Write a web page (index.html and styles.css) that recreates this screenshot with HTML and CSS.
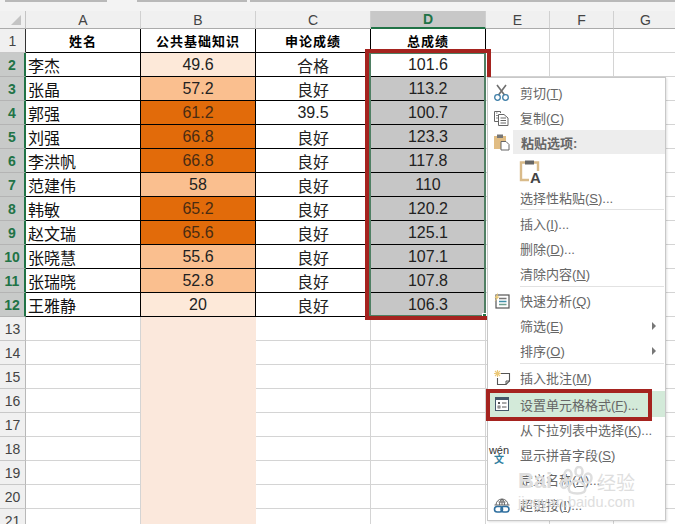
FILE: index.html
```html
<!DOCTYPE html>
<html>
<head>
  <meta charset="utf-8">
  <link rel="stylesheet" href="styles.css">
</head>

<body>
  <div class="sheet">
    <div class="formula-edge">
      <span class="seg seg-a"></span>
      <span class="seg seg-b"></span>
      <span class="seg seg-c"></span>
    </div>

    <div class="grid">
      <div class="corner"><span class="corner-mark"></span></div>
      <div class="ch">A</div><div class="ch">B</div><div class="ch">C</div><div class="ch ch-sel">D</div><div class="ch">E</div><div class="ch">F</div><div class="ch">G</div>

      <div class="rh rh-top">1</div>
      <div class="c bk th">姓名</div><div class="c bk th">公共基础知识</div><div class="c bk th">申论成绩</div><div class="c bk th">总成绩</div><div class="c"></div><div class="c"></div><div class="c"></div>

      <div class="rh sel">2</div>
      <div class="c bk name">李杰</div><div class="c bk lo">49.6</div><div class="c bk">合格</div><div class="c bk">101.6</div><div class="c"></div><div class="c"></div><div class="c"></div>

      <div class="rh sel">3</div>
      <div class="c bk name">张晶</div><div class="c bk mid">57.2</div><div class="c bk">良好</div><div class="c bk gray">113.2</div><div class="c"></div><div class="c"></div><div class="c"></div>

      <div class="rh sel">4</div>
      <div class="c bk name">郭强</div><div class="c bk hi">61.2</div><div class="c bk">39.5</div><div class="c bk gray">100.7</div><div class="c"></div><div class="c"></div><div class="c"></div>

      <div class="rh sel">5</div>
      <div class="c bk name">刘强</div><div class="c bk hi">66.8</div><div class="c bk">良好</div><div class="c bk gray">123.3</div><div class="c"></div><div class="c"></div><div class="c"></div>

      <div class="rh sel">6</div>
      <div class="c bk name">李洪帆</div><div class="c bk hi">66.8</div><div class="c bk">良好</div><div class="c bk gray">117.8</div><div class="c"></div><div class="c"></div><div class="c"></div>

      <div class="rh sel">7</div>
      <div class="c bk name">范建伟</div><div class="c bk mid">58</div><div class="c bk">良好</div><div class="c bk gray">110</div><div class="c"></div><div class="c"></div><div class="c"></div>

      <div class="rh sel">8</div>
      <div class="c bk name">韩敏</div><div class="c bk hi">65.2</div><div class="c bk">良好</div><div class="c bk gray">120.2</div><div class="c"></div><div class="c"></div><div class="c"></div>

      <div class="rh sel">9</div>
      <div class="c bk name">赵文瑞</div><div class="c bk hi">65.6</div><div class="c bk">良好</div><div class="c bk gray">125.1</div><div class="c"></div><div class="c"></div><div class="c"></div>

      <div class="rh sel">10</div>
      <div class="c bk name">张晓慧</div><div class="c bk mid">55.6</div><div class="c bk">良好</div><div class="c bk gray">107.1</div><div class="c"></div><div class="c"></div><div class="c"></div>

      <div class="rh sel">11</div>
      <div class="c bk name">张瑞晓</div><div class="c bk mid">52.8</div><div class="c bk">良好</div><div class="c bk gray">107.8</div><div class="c"></div><div class="c"></div><div class="c"></div>

      <div class="rh sel">12</div>
      <div class="c bk name">王雅静</div><div class="c bk lo">20</div><div class="c bk">良好</div><div class="c bk gray">106.3</div><div class="c"></div><div class="c"></div><div class="c"></div>

      <div class="rh">13</div><div class="c"></div><div class="c tint"></div><div class="c"></div><div class="c"></div><div class="c"></div><div class="c"></div><div class="c"></div>
      <div class="rh">14</div><div class="c"></div><div class="c tint"></div><div class="c"></div><div class="c"></div><div class="c"></div><div class="c"></div><div class="c"></div>
      <div class="rh">15</div><div class="c"></div><div class="c tint"></div><div class="c"></div><div class="c"></div><div class="c"></div><div class="c"></div><div class="c"></div>
      <div class="rh">16</div><div class="c"></div><div class="c tint"></div><div class="c"></div><div class="c"></div><div class="c"></div><div class="c"></div><div class="c"></div>
      <div class="rh">17</div><div class="c"></div><div class="c tint"></div><div class="c"></div><div class="c"></div><div class="c"></div><div class="c"></div><div class="c"></div>
      <div class="rh">18</div><div class="c"></div><div class="c tint"></div><div class="c"></div><div class="c"></div><div class="c"></div><div class="c"></div><div class="c"></div>
      <div class="rh">19</div><div class="c"></div><div class="c tint"></div><div class="c"></div><div class="c"></div><div class="c"></div><div class="c"></div><div class="c"></div>
      <div class="rh">20</div><div class="c"></div><div class="c tint"></div><div class="c"></div><div class="c"></div><div class="c"></div><div class="c"></div><div class="c"></div>
      <div class="rh">21</div><div class="c"></div><div class="c tint"></div><div class="c"></div><div class="c"></div><div class="c"></div><div class="c"></div><div class="c"></div>
    </div>

    <!-- selection and the red marks drawn on top of the screenshot -->
    <div class="selection"><span class="fill-handle"></span></div>
    <div class="mark mark-column"></div>

    <div class="menu">
      <div class="item">
        <span class="ico">
          <svg width="18" height="18" viewBox="0 0 18 18" fill="none">
            <path d="M4 1 L11.5 11 M13 1 L5.5 11" stroke="#6f6f6f" stroke-width="1.6"/>
            <circle cx="4.5" cy="13.5" r="2.8" stroke="#3f7fa8" stroke-width="1.3"/>
            <circle cx="12.5" cy="13.5" r="2.8" stroke="#3f7fa8" stroke-width="1.3"/>
          </svg>
        </span>
        <span>剪切(<u>T</u>)</span>
      </div>
      <div class="item">
        <span class="ico">
          <svg width="18" height="18" viewBox="0 0 18 18" fill="none" stroke="#666" stroke-width="1">
            <path d="M1.5 2.5 H7.5 V4 M1.5 2.5 V12.5 H5"/>
            <path d="M3 4 H4.5 M3 6.5 H5 M3 9 H5" stroke="#888"/>
            <path d="M5.5 5.5 H11 L15 9 V16.5 H5.5 Z" fill="#fff"/>
            <path d="M7.5 9 H13 M7.5 11.5 H13 M7.5 14 H13"/>
          </svg>
        </span>
        <span>复制(<u>C</u>)</span>
      </div>
      <div class="item item-head">
        <span class="ico">
          <svg width="18" height="18" viewBox="0 0 18 18">
            <rect x="1" y="3" width="12" height="13" fill="#e1bd84"/>
            <rect x="4" y="1.5" width="6" height="3.5" fill="#777"/>
            <path d="M8 8.5 H13 L16 11.5 V17 H8 Z" fill="#fff" stroke="#666" stroke-width="1"/>
          </svg>
        </span>
        <span class="head-label">粘贴选项:</span>
      </div>
      <div class="item-paste">
        <svg width="24" height="26" viewBox="0 0 24 26" fill="none">
          <path d="M6 3.5 H2 V21 H10" stroke="#d9bb8a" stroke-width="2.4"/>
          <path d="M15 3.5 H19 V12" stroke="#d9bb8a" stroke-width="2.4"/>
          <rect x="6" y="1.5" width="9" height="4" fill="#666"/>
          <text x="11" y="24" class="paste-a">A</text>
        </svg>
      </div>
      <div class="item item-short"><span class="ico"></span><span>选择性粘贴(<u>S</u>)...</span></div>
      <div class="sep"></div>

      <div class="item"><span class="ico"></span><span>插入(<u>I</u>)...</span></div>
      <div class="item"><span class="ico"></span><span>删除(<u>D</u>)...</span></div>
      <div class="item"><span class="ico"></span><span>清除内容(<u>N</u>)</span></div>
      <div class="sep"></div>

      <div class="item">
        <span class="ico">
          <svg width="18" height="18" viewBox="0 0 18 18" fill="none">
            <rect x="3" y="3" width="13" height="13" fill="#fff" stroke="#555" stroke-width="1.2"/>
            <path d="M6 6.5 H13.5" stroke="#777" stroke-width="1.5"/>
            <path d="M6 9.5 H13.5" stroke="#3f8fa8" stroke-width="1.5"/>
            <path d="M6 12.5 H13.5" stroke="#6f9f8f" stroke-width="1.5"/>
            <path d="M5 0.5 L1.5 6 H3.5 L1.5 10 L6.5 4.5 H4.5 Z" fill="#e9c877"/>
          </svg>
        </span>
        <span>快速分析(<u>Q</u>)</span>
      </div>
      <div class="item"><span class="ico"></span><span>筛选(<u>E</u>)</span><span class="arrow"></span></div>
      <div class="item"><span class="ico"></span><span>排序(<u>O</u>)</span><span class="arrow"></span></div>
      <div class="sep"></div>

      <div class="item">
        <span class="ico">
          <svg width="18" height="18" viewBox="0 0 18 18" fill="none">
            <path d="M8 4.5 H16.5 V12 L13 15.5 H4.5 V9" stroke="#555" stroke-width="1.1"/>
            <path d="M13 15.5 V12 H16.5" stroke="#555" stroke-width="1"/>
            <path d="M4.5 1 V8 M1 4.5 H8 M2 2 L7 7 M7 2 L2 7" stroke="#ecc978" stroke-width="1.1"/>
          </svg>
        </span>
        <span>插入批注(<u>M</u>)</span>
      </div>
      <div class="item item-active">
        <span class="ico">
          <svg width="18" height="18" viewBox="0 0 18 18" fill="none">
            <rect x="2.5" y="2.5" width="13" height="13" fill="#fff" stroke="#44586a" stroke-width="1"/>
            <rect x="2.5" y="2.5" width="13" height="2.5" fill="#44586a"/>
            <rect x="5" y="7" width="2" height="2" fill="#555"/>
            <rect x="5" y="11" width="2" height="2" stroke="#555" stroke-width=".8"/>
            <path d="M9 8 H13.5 M9 12 H13.5" stroke="#555"/>
          </svg>
        </span>
        <span>设置单元格格式(<u>F</u>)...</span>
      </div>
      <div class="item"><span class="ico"></span><span>从下拉列表中选择(<u>K</u>)...</span></div>
      <div class="item">
        <span class="ico ico-wen"><span class="wen">wén</span><span class="wen-zi">文</span></span>
        <span>显示拼音字段(<u>S</u>)</span>
      </div>
      <div class="item"><span class="ico"></span><span>定义名称(<u>A</u>)...</span></div>
      <div class="item">
        <span class="ico">
          <svg width="18" height="18" viewBox="0 0 18 18" fill="none">
            <path d="M3 9 A6 6 0 0 1 15 9 M1.5 9 H16.5 M9 3 V9 M5.5 6 H12.5 M6.5 9 C6.5 6 7.5 4 9 3 C10.5 4 11.5 6 11.5 9" stroke="#666" stroke-width="1"/>
            <rect x="1.5" y="10.5" width="8" height="5.5" rx="2.7" stroke="#2f6f9f" stroke-width="1.6"/>
            <rect x="8" y="10.5" width="8" height="5.5" rx="2.7" stroke="#2f6f9f" stroke-width="1.6"/>
          </svg>
        </span>
        <span>超链接(<u>I</u>)...</span>
      </div>
    </div>

    <div class="mark mark-item"></div>

    <div class="watermark">
      <div class="wm-top">
        <span class="wm-bai">Bai</span>
        <svg width="36" height="30" viewBox="0 0 36 30" fill="none" stroke="#dedede" stroke-width="2.5">
          <ellipse cx="10" cy="9" rx="3.5" ry="5"/>
          <ellipse cx="21" cy="5.5" rx="3.5" ry="4.5"/>
          <ellipse cx="30" cy="12" rx="3.5" ry="4.5"/>
          <ellipse cx="6" cy="18" rx="3" ry="4"/>
          <path d="M12 26 C8 20 15 14 19 15 C24 15 30 21 26 26 C23 28 16 28 12 26 Z"/>
        </svg>
        <span class="wm-jy">经验</span>
      </div>
      <div class="wm-url">jingyan.baidu.com</div>
    </div>
  </div>
</body>
</html>
```

FILE: styles.css
```css
body {
  margin: 0;
  background-color: #fff;
  font-family: "Liberation Sans", "Noto Sans CJK SC", sans-serif;
}

.sheet {
  position: relative;
  width: 675px;
  height: 524px;
  overflow: hidden;
}

/* bottom edge of the formula bar, cut off by the crop */
.formula-edge {
  display: flex;
  height: 11px;
  background-color: #f3f3f3;
}

.seg {
  height: 2px;
  background-color: #b9b9b9;
}

.seg-a {
  width: 102px;
  margin-left: 5px;
}

.seg-b {
  width: 110px;
  margin-left: 30px;
}

.seg-c {
  flex: 1;
  margin-left: 3px;
}

.grid {
  display: grid;
  grid-template-columns: 26px 115px 115px 115px 115px 64px 64px 64px;
  grid-template-rows: 18px repeat(21, 24px);
  width: 702px;
}

.corner {
  display: flex;
  justify-content: flex-end;
  align-items: flex-end;
  padding: 0 4px 3px 0;
  background-color: #f0f0f0;
  border-right: 1px solid #c4c4c4;
  border-bottom: 1px solid #ababab;
}

.corner-mark {
  width: 10px;
  height: 10px;
  background-color: #c4c4c4;
  clip-path: polygon(100% 0, 100% 100%, 0 100%);
}

.ch {
  display: flex;
  align-items: center;
  justify-content: center;
  background-color: #f0f0f0;
  border-right: 1px solid #d0d0d0;
  border-bottom: 1px solid #ababab;
  color: #444;
  font-size: 14px;
}

.ch-sel {
  background-color: #c8c8c8;
  border-bottom: 2px solid #217346;
  color: #217346;
  font-weight: bold;
}

.rh {
  display: flex;
  align-items: center;
  justify-content: center;
  background-color: #f0f0f0;
  border-right: 1px solid #b8b8b8;
  border-bottom: 1px solid #c8c8c8;
  color: #444;
  font-size: 14px;
}

.rh-top {
  border-right-color: #333;
}

.rh.sel {
  background-color: #c8cac9;
  border-right: 2px solid #217346;
  border-bottom-color: #b4b4b4;
  color: #217346;
  font-weight: bold;
}

.c {
  display: flex;
  align-items: center;
  justify-content: center;
  border-right: 1px solid #d4d4d4;
  border-bottom: 1px solid #d4d4d4;
  color: #222;
  font-size: 16px;
}

.c.bk {
  border-right-color: #000;
  border-bottom-color: #000;
}

.c.th {
  font-size: 13px;
  font-weight: bold;
  letter-spacing: 1px;
  color: #000;
}

.c.name {
  justify-content: flex-start;
  padding-left: 2px;
  color: #111;
}

.lo {
  background-color: #fde9d9;
}

.mid {
  background-color: #fabf8f;
}

.hi {
  background-color: #e26b0a;
  color: #4a2c12;
}

.gray {
  background-color: #c6c6c6;
}

.c.tint {
  background-color: #fbe8dc;
  border-right-color: #fbe8dc;
  border-bottom-color: #fbe8dc;
}

.selection {
  position: absolute;
  left: 369px;
  top: 52px;
  width: 117px;
  height: 265px;
  box-sizing: border-box;
  border: 2px solid #4f7f63;
}

.fill-handle {
  position: absolute;
  right: -3px;
  bottom: -3px;
  width: 5px;
  height: 5px;
  background-color: #217346;
  border: 1px solid #fff;
  box-sizing: border-box;
}

.mark {
  position: absolute;
  box-sizing: border-box;
  border: 4px solid #a5231f;
}

.mark-column {
  left: 365px;
  top: 49px;
  width: 126px;
  height: 271px;
}

.mark-item {
  left: 486px;
  top: 389px;
  width: 166px;
  height: 32px;
}

.menu {
  position: absolute;
  left: 487px;
  top: 77px;
  width: 179px;
  height: 444px;
  box-sizing: border-box;
  padding-top: 2px;
  background-color: #fff;
  border: 1px solid #c8c8c8;
  box-shadow: 1px 1px 2px rgba(0, 0, 0, 0.12);
  color: #666;
  font-size: 13px;
}

.item {
  display: flex;
  align-items: center;
  height: 25px;
}

.ico {
  display: flex;
  flex: none;
  width: 27px;
  padding-left: 5px;
}

.item-head {
  height: 24px;
}

.head-label {
  flex: 1;
  align-self: stretch;
  display: flex;
  align-items: center;
  margin-left: -7px;
  padding-left: 8px;
  background-color: #ededed;
  font-weight: bold;
}

.item-paste {
  display: flex;
  align-items: flex-end;
  height: 31px;
  padding-left: 31px;
}

.paste-a {
  font-family: "Liberation Sans", sans-serif;
  font-size: 15px;
  font-weight: bold;
  fill: #444;
}

.item-short {
  height: 24px;
}

.sep {
  height: 1px;
  margin: 0 1px 1px 32px;
  background-color: #e2e2e2;
}

.arrow {
  width: 0;
  height: 0;
  margin-left: auto;
  margin-right: 9px;
  border-left: 4px solid #777;
  border-top: 4px solid transparent;
  border-bottom: 4px solid transparent;
}

.item-active {
  height: 26px;
  margin-top: 1px;
  background-color: #d3ead9;
}

.ico-wen {
  flex-direction: column;
  align-items: center;
  width: 22px;
  padding-left: 0;
  padding-right: 10px;
  line-height: 10px;
}

.wen {
  font-size: 11px;
  color: #333;
}

.wen-zi {
  font-size: 10px;
  font-weight: bold;
  color: #2f7f9f;
}

/* faint site watermark across the lower menu */
.watermark {
  position: absolute;
  left: 518px;
  top: 466px;
  width: 122px;
  color: #dedede;
}

.wm-top {
  display: flex;
  align-items: center;
}

.wm-bai {
  width: 40px;
  font-size: 22px;
  font-weight: bold;
}

.wm-jy {
  margin-left: 3px;
  font-size: 19px;
  letter-spacing: 0;
}

.wm-url {
  font-size: 14.5px;
  line-height: 12px;
  white-space: nowrap;
}
```
